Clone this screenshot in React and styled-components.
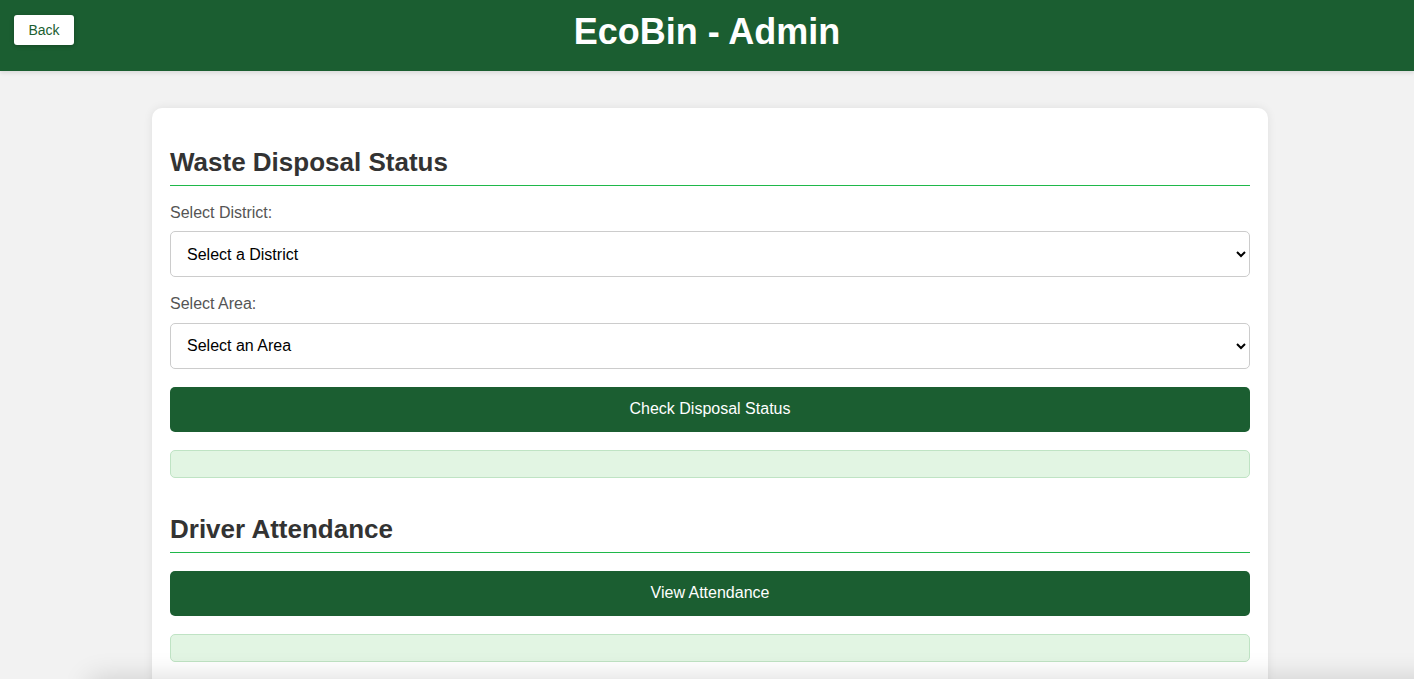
import React from "react";
import styled, { createGlobalStyle } from "styled-components";

const GlobalStyle = createGlobalStyle`
  html, body {
    margin: 0;
    padding: 0;
    background: #f2f2f2;
    font-family: "Liberation Sans", Arial, sans-serif;
  }
  * { box-sizing: border-box; }
`;

const Header = styled.header`
  display: grid;
  grid-template-columns: 1fr auto 1fr;
  align-items: start;
  padding: 15px 14px 23px;
  background: #1b5e31;
  box-shadow: 0 2px 4px rgba(0, 0, 0, 0.1);
`;

const BackButton = styled.button`
  justify-self: start;
  width: 60px;
  height: 30px;
  padding: 0;
  background: #ffffff;
  color: #1b5e31;
  border: none;
  border-radius: 3px;
  font-family: "Liberation Sans", Arial, sans-serif;
  font-size: 14px;
  box-shadow: 0 1px 4px rgba(0, 0, 0, 0.25);
  cursor: pointer;
`;

const Title = styled.h1`
  margin: 0;
  color: #ffffff;
  font-size: 36px;
  line-height: 33px;
  font-weight: 700;
  text-align: center;
`;

const Main = styled.main`
  padding: 37px 0 40px 6px;
`;

const Card = styled.div`
  width: 1116px;
  margin: 0 auto;
  padding: 18px 18px 40px;
  background: #ffffff;
  border-radius: 10px;
  box-shadow: 0 0 10px rgba(0, 0, 0, 0.08);
`;

const Section = styled.section`
  display: flex;
  flex-direction: column;
  margin-bottom: 15px;
`;

const SectionTitle = styled.h2`
  margin: 21px 0 18px;
  padding-bottom: 8px;
  border-bottom: 1px solid #1fb84a;
  color: #333333;
  font-size: 26px;
  line-height: 30px;
  font-weight: 700;
`;

const Label = styled.label`
  display: block;
  margin-bottom: 9px;
  color: #555555;
  font-size: 16px;
  line-height: 18.4px;
`;

const Select = styled.select`
  width: 100%;
  height: 46px;
  margin-bottom: 18px;
  padding: 0 12px;
  background: #ffffff;
  color: #000000;
  border: 1px solid #cccccc;
  border-radius: 5px;
  font-family: "Liberation Sans", Arial, sans-serif;
  font-size: 16px;
`;

const ActionButton = styled.button`
  width: 100%;
  height: 45px;
  margin-bottom: 18px;
  background: #1b5e31;
  color: #ffffff;
  border: none;
  border-radius: 5px;
  font-family: "Liberation Sans", Arial, sans-serif;
  font-size: 16px;
  cursor: pointer;
`;

const ResultBox = styled.div`
  height: 28px;
  background: #e2f5e3;
  border: 1px solid #bfe3c4;
  border-radius: 5px;
`;

const BottomShade = styled.div`
  position: fixed;
  left: 90px;
  right: -40px;
  bottom: -40px;
  height: 40px;
  box-shadow: 0 0 28px rgba(0, 0, 0, 0.16);
  pointer-events: none;
`;

export default function App() {
  return (
    <>
      <GlobalStyle />
      <Header>
        <BackButton>Back</BackButton>
        <Title>EcoBin - Admin</Title>
        <span />
      </Header>
      <Main>
        <Card>
          <Section>
            <SectionTitle>Waste Disposal Status</SectionTitle>
            <Label htmlFor="district">Select District:</Label>
            <Select id="district" defaultValue="">
              <option value="">Select a District</option>
            </Select>
            <Label htmlFor="area">Select Area:</Label>
            <Select id="area" defaultValue="">
              <option value="">Select an Area</option>
            </Select>
            <ActionButton>Check Disposal Status</ActionButton>
            <ResultBox />
          </Section>
          <Section>
            <SectionTitle>Driver Attendance</SectionTitle>
            <ActionButton>View Attendance</ActionButton>
            <ResultBox />
          </Section>
        </Card>
      </Main>
      <BottomShade />
    </>
  );
}
